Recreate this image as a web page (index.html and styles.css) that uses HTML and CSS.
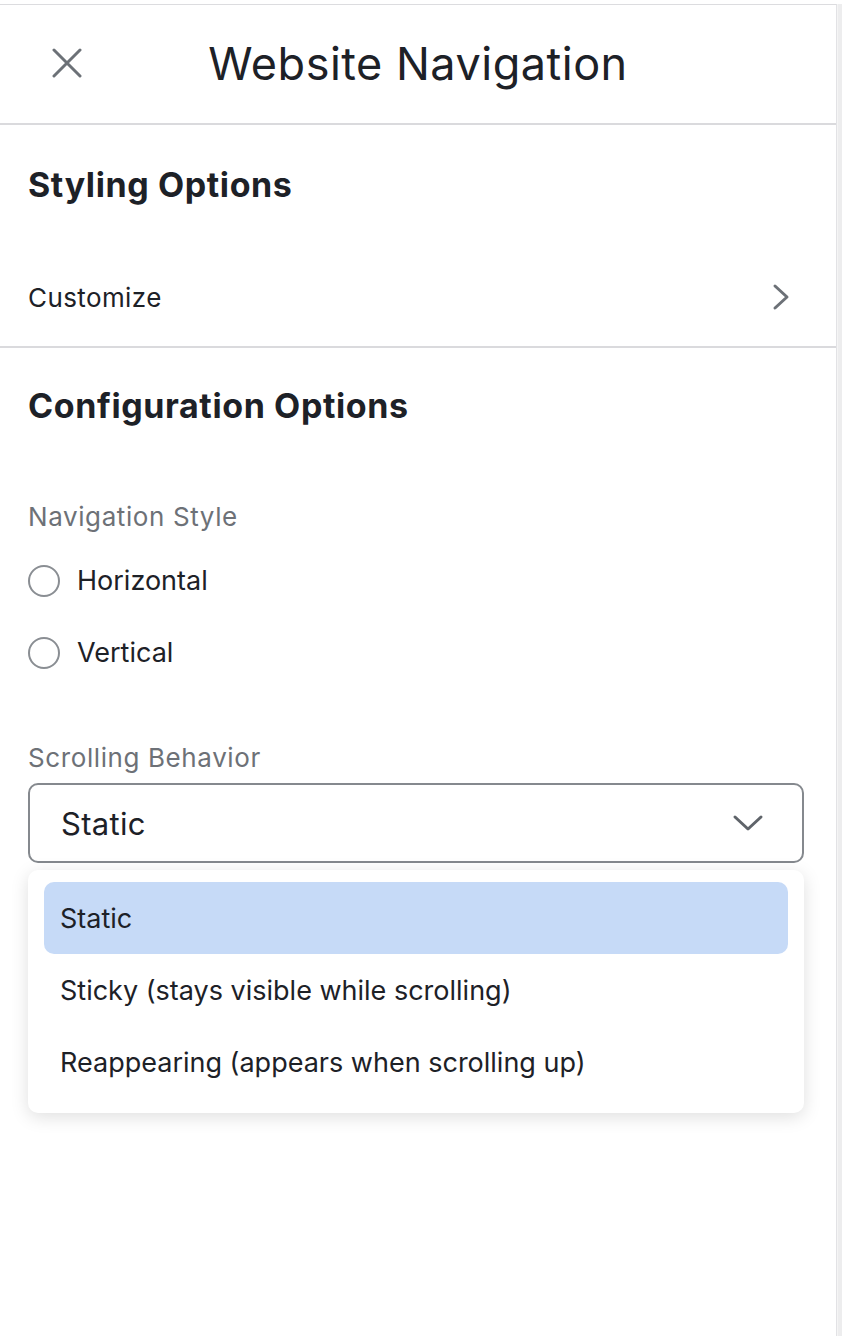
FILE: index.html
```html
<!DOCTYPE html>
<html lang="en">
<head>
<meta charset="utf-8">
<title>Website Navigation</title>
<link rel="stylesheet" href="styles.css">
</head>
<body>
<div class="frame">
  <div class="panel">
    <header class="header">
      <button class="close" aria-label="Close">
        <svg width="30" height="30" viewBox="0 0 30 30"><path d="M2 2 L28 28 M28 2 L2 28" stroke="#6c7177" stroke-width="3" stroke-linecap="round" fill="none"/></svg>
      </button>
      <h1 class="title">Website Navigation</h1>
      <span class="spacer"></span>
    </header>

    <section class="section styling">
      <h2 class="section-title">Styling Options</h2>
      <div class="link-row">
        <span>Customize</span>
        <svg width="18" height="28" viewBox="0 0 18 28"><path d="M3 3 L15 14 L3 25" stroke="#6c7177" stroke-width="3" stroke-linecap="round" stroke-linejoin="round" fill="none"/></svg>
      </div>
    </section>

    <section class="section config">
      <h2 class="section-title">Configuration Options</h2>
      <div class="field">
        <div class="label">Navigation Style</div>
        <div class="radios">
          <label class="radio"><span class="circle"></span><span>Horizontal</span></label>
          <label class="radio"><span class="circle"></span><span>Vertical</span></label>
        </div>
      </div>
      <div class="field scroll-field">
        <div class="label">Scrolling Behavior</div>
        <div class="select">
          <span>Static</span>
          <svg width="32" height="20" viewBox="0 0 32 20"><path d="M3 4 L16 16 L29 4" stroke="#5f646a" stroke-width="3" stroke-linecap="round" stroke-linejoin="round" fill="none"/></svg>
        </div>
        <ul class="menu">
          <li class="option selected">Static</li>
          <li class="option">Sticky (stays visible while scrolling)</li>
          <li class="option">Reappearing (appears when scrolling up)</li>
        </ul>
      </div>
    </section>
  </div>
  <div class="scrollbar"></div>
</div>
</body>
</html>
```

FILE: styles.css
```css
* { box-sizing: border-box; }
html, body { margin: 0; padding: 0; background: #fff; }
body {
  font-family: "Inter", "Open Sans", sans-serif;
  color: #1d2127;
}
.frame {
  display: flex;
  height: 1336px;
  padding-top: 3px;
  border-top: 1px solid #fff;
}
.panel {
  width: 837px;
  border-top: 1px solid #dcdcdf;
  border-right: 1px solid #e2e2e5;
  background: #fff;
}
.scrollbar {
  flex: 1;
  background: #ededee;
  border-left: 1px solid #f5f5f5;
}
.header {
  height: 120px;
  display: grid;
  grid-template-columns: 1fr auto 1fr;
  align-items: center;
  border-bottom: 2px solid #dadadd;
  padding: 0 52px 2px;
}
.close {
  border: 0;
  background: none;
  padding: 0;
  width: 30px;
  height: 30px;
  display: flex;
}
.title {
  margin: 0;
  font-size: 45px;
  font-weight: 400;
  letter-spacing: 0.5px;
  color: #1d2127;
}
.section { padding: 0 32px 0 28px; }
.styling {
  border-bottom: 2px solid #dadadd;
  padding-top: 40px;
}
.section-title {
  margin: 0;
  font-size: 34px;
  font-weight: 700;
  line-height: 40px;
  letter-spacing: 0.6px;
  color: #1d2127;
}
.link-row {
  height: 40px;
  margin: 72px 0 29px;
  display: flex;
  align-items: center;
  justify-content: space-between;
  padding-right: 14px;
  font-size: 26px;
  letter-spacing: 0.4px;
}
.config { padding-top: 38px; }
.field { margin-top: 76px; }
.label {
  font-size: 26px;
  color: #6d7177;
  line-height: 30px;
  letter-spacing: 0.6px;
}
.radios {
  display: flex;
  flex-direction: column;
  gap: 40px;
  margin-top: 33px;
}
.radio {
  display: flex;
  align-items: center;
  gap: 17px;
  font-size: 27px;
  line-height: 32px;
}
.circle {
  width: 32px;
  height: 32px;
  border-radius: 50%;
  border: 2px solid #8a8e93;
}
.scroll-field { margin-top: 74px; }
.select {
  margin-top: 10px;
  height: 80px;
  border: 2px solid #85898e;
  border-radius: 10px;
  display: flex;
  align-items: center;
  justify-content: space-between;
  padding: 0 38px 0 31px;
  font-size: 31px;
  letter-spacing: 0.3px;
}
.menu {
  list-style: none;
  margin: 7px 0 0;
  padding: 12px 16px 15px;
  background: #fff;
  border-radius: 10px;
  box-shadow: 0 4px 18px rgba(0, 0, 0, 0.13);
}
.option {
  height: 72px;
  display: flex;
  align-items: center;
  padding-left: 16px;
  font-size: 27px;
  border-radius: 10px;
}
.option.selected { background: #c6daf7; }
```
